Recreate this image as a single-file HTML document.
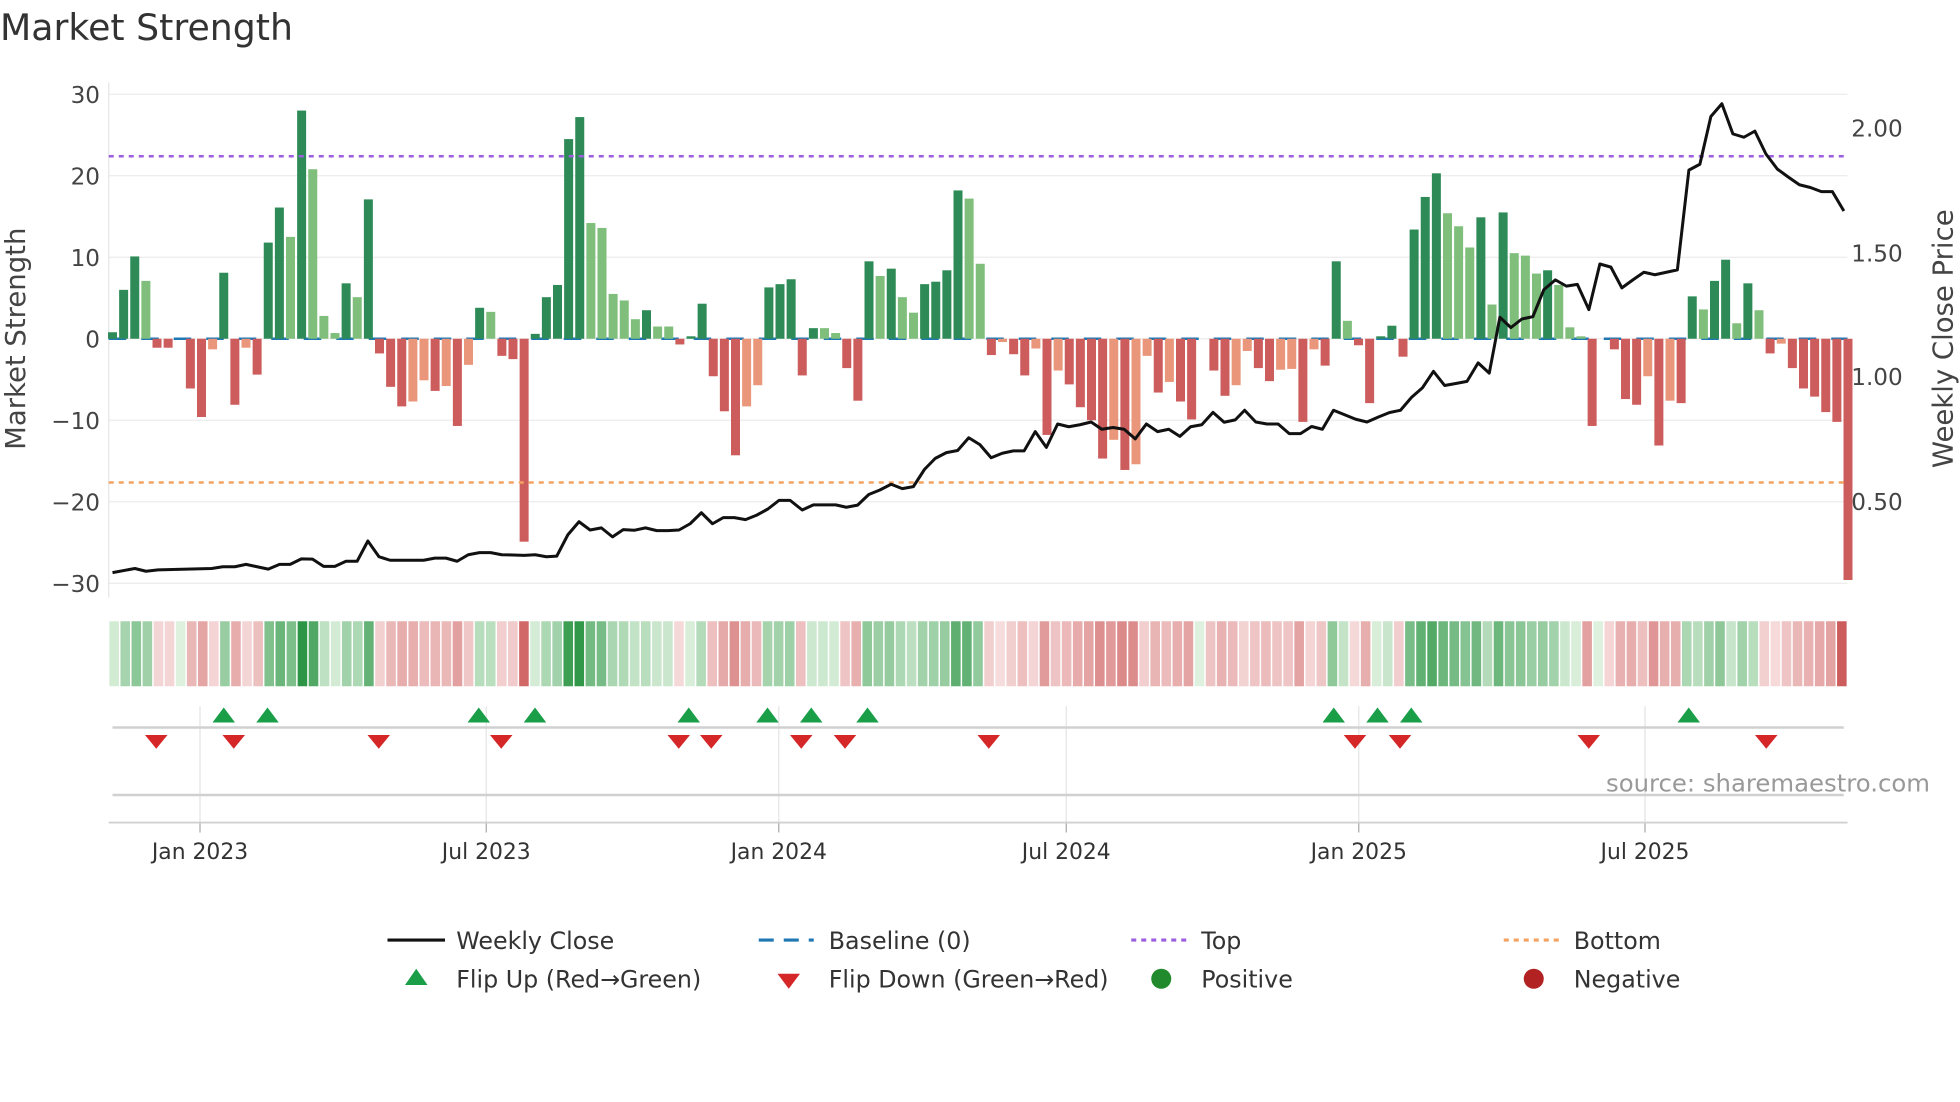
<!DOCTYPE html>
<html><head><meta charset="utf-8">
<style>
html,body{margin:0;padding:0;background:#fff;width:1960px;height:1102px;overflow:hidden}
svg{display:block}
text{font-family:"DejaVu Sans","Liberation Sans",sans-serif}
</style></head>
<body>
<svg id="c" width="1960" height="1102" viewBox="0 0 1568 881.6" xmlns="http://www.w3.org/2000/svg">
<rect width="1568" height="882" fill="#fff"/>
<text x="0" y="32" font-size="29" fill="#333">Market Strength</text>
<g id="grid" stroke="#ececec" stroke-width="1"></g>
<line x1="87" y1="66" x2="87" y2="478" stroke="#e6e6e6"/>
<line x1="87" y1="271" x2="1478" y2="271" stroke="#1f77b4" stroke-width="2" stroke-dasharray="14,12"/>
<g id="bars"></g>
<line x1="87" y1="125" x2="1478" y2="125" stroke="#9b5fe0" stroke-width="2" stroke-dasharray="4,4"/>
<line x1="87" y1="386" x2="1478" y2="386" stroke="#f4a261" stroke-width="2" stroke-dasharray="4,4"/>
<polyline id="price" fill="none" stroke="#111" stroke-width="2.4" stroke-linejoin="round"/>
<g id="ylab" font-size="18.5" fill="#444"></g>
<text transform="translate(20,271) rotate(-90)" text-anchor="middle" font-size="22" fill="#444">Market Strength</text>
<text transform="translate(1562,271) rotate(-90)" text-anchor="middle" font-size="22" fill="#444">Weekly Close Price</text>
<g id="strip"></g>
<g id="vgrid" stroke="#e4e4e4"></g>
<line x1="90" y1="582" x2="1475" y2="582" stroke="#d0d0d0" stroke-width="2"/>
<line x1="90" y1="636" x2="1475" y2="636" stroke="#d0d0d0" stroke-width="2"/>
<line x1="87" y1="658" x2="1478" y2="658" stroke="#d0d0d0" stroke-width="1.5"/>
<g id="marks"></g>
<text x="1544" y="633" text-anchor="end" font-size="19.5" fill="#999">source: sharemaestro.com</text>
<g id="xlab" font-size="17.5" fill="#333" text-anchor="middle"></g>
<g font-size="19" fill="#333">
<line x1="310" y1="752" x2="356" y2="752" stroke="#111" stroke-width="2.5"/>
<text x="365" y="759">Weekly Close</text>
<line x1="607" y1="752" x2="651" y2="752" stroke="#1f77b4" stroke-width="2.5" stroke-dasharray="12,8"/>
<text x="663" y="759">Baseline (0)</text>
<line x1="905" y1="752" x2="949" y2="752" stroke="#9b5fe0" stroke-width="2.5" stroke-dasharray="4,4"/>
<text x="961" y="759">Top</text>
<line x1="1203" y1="752" x2="1247" y2="752" stroke="#f4a261" stroke-width="2.5" stroke-dasharray="4,4"/>
<text x="1259" y="759">Bottom</text>
<polygon points="333,775 342,788 324,788" fill="#1a9e48"/>
<text x="365" y="790">Flip Up (Red→Green)</text>
<polygon points="622,779 640,779 631,791" fill="#d62728"/>
<text x="663" y="790">Flip Down (Green→Red)</text>
<circle cx="929" cy="783" r="8" fill="#218a2c"/>
<text x="961" y="790">Positive</text>
<circle cx="1227" cy="783" r="8" fill="#b22222"/>
<text x="1259" y="790">Negative</text>
</g>
</svg>
<script>
var NS="http://www.w3.org/2000/svg";
function el(p,t,a,txt){var e=document.createElementNS(NS,t);for(var k in a)e.setAttribute(k,a[k]);if(txt!=null)e.textContent=txt;document.getElementById(p).appendChild(e);return e;}
var V=[[0.8,1],[6,1],[10.1,1],[7.1,0],[-1.1,1],[-1.1,1],[0,1],[-6.1,1],[-9.6,1],[-1.3,0],[8.1,1],[-8.1,1],[-1.1,0],[-4.4,1],[11.8,1],[16.1,1],[12.5,0],[28,1],[20.8,0],[2.8,0],[0.7,0],[6.8,1],[5.1,0],[17.1,1],[-1.8,1],[-5.9,1],[-8.3,1],[-7.7,0],[-5.1,0],[-6.4,1],[-5.8,0],[-10.7,1],[-3.2,0],[3.8,1],[3.3,0],[-2.1,1],[-2.5,1],[-24.9,1],[0.6,1],[5.1,1],[6.6,1],[24.5,1],[27.2,1],[14.2,0],[13.6,0],[5.5,0],[4.7,0],[2.4,0],[3.5,1],[1.5,0],[1.5,0],[-0.7,1],[0.3,1],[4.3,1],[-4.6,1],[-8.9,1],[-14.3,1],[-8.3,0],[-5.7,0],[6.3,1],[6.7,1],[7.3,1],
[-4.5,1],[1.3,1],[1.3,0],[0.7,0],[-3.6,1],[-7.6,1],[9.5,1],[7.7,0],[8.6,1],[5.1,0],[3.2,0],[6.7,1],[7,1],[8.4,1],[18.2,1],[17.2,0],[9.2,0],[-2,1],[-0.4,0],[-1.9,1],[-4.5,1],[-1.2,0],[-11.8,1],[-3.9,0],[-5.6,1],[-8.4,1],[-10,1],[-14.7,1],[-12.4,0],[-16.1,1],[-15.4,0],[-2.1,0],[-6.6,1],[-5.3,0],[-7.7,1],[-9.9,1],[0,1],[-3.9,1],[-7,1],[-5.7,0],[-1.5,0],[-3.6,1],[-5.2,1],[-3.8,0],[-3.7,0],[-10.2,1],[-1.3,0],[-3.3,1],[9.5,1],[2.2,0],[-0.8,1],[-7.9,1],[0.3,1],[1.6,1],[-2.2,1],[13.4,1],[17.4,1],[20.3,1],[15.4,0],[13.8,0],[11.2,0],[14.9,1],[4.2,0],[15.5,1],
[10.5,0],[10.2,0],[8,0],[8.4,1],[6.6,0],[1.4,0],[0.3,0],[-10.7,1],[0,1],[-1.3,1],[-7.4,1],[-8.1,1],[-4.6,0],[-13.1,1],[-7.6,0],[-7.9,1],[5.2,1],[3.6,0],[7.1,1],[9.7,1],[1.9,0],[6.8,1],[3.5,0],[-1.8,1],[-0.6,0],[-3.6,1],[-6.1,1],[-7.1,1],[-9,1],[-10.2,1],[-29.6,1]];
var Y0=271,S=6.52,DX=8.9,X0=90;
for(var v=-30;v<=30;v+=10){var y=Y0-v*S;el("grid","line",{x1:87,y1:y,x2:1478,y2:y});el("ylab","text",{x:80,y:y+7,"text-anchor":"end"},(v<0?"\u2212"+(-v):""+v));}
[["2.00",102],["1.50",202],["1.00",301],["0.50",401]].forEach(function(a){el("ylab","text",{x:1481,y:a[1]+7},a[0]);});
function mix(a,b,t){var r=[];for(var i=0;i<3;i++)r.push(Math.round(a[i]+(b[i]-a[i])*t));return "rgb("+r.join(",")+")";}
var SW=1391/V.length;
V.forEach(function(d,i){var v=d[0],x=X0+DX*i-3.6;
 if(v!==0){var c=v>0?(d[1]?"#2e8b57":"#7fbf7b"):(d[1]?"#cd5c5c":"#e9967a");
  var y=v>0?Y0-v*S:Y0;el("bars","rect",{x:x,y:y,width:7.2,height:Math.abs(v)*S,fill:c});}
 var t=Math.min(1,Math.abs(v)/28);t=Math.pow(t,0.75);
 var col=v>=0?mix([222,241,222],[45,150,70],t):mix([248,225,225],[205,92,92],t);
 el("strip","rect",{x:87+SW*i+0.5,y:497,width:SW-1.2,height:52,fill:col});
});
var P=[];
function add(pts,ox,kx,ky){pts.forEach(function(p){P.push([ox+p[0]/kx,Y0-(752-p[1])*ky]);});}
add([[28,1432],[78,1420],[103,1428],[130,1424],[250,1420],[275,1415],[302,1415],[327,1408],[352,1415],[377,1422],[402,1408],[426,1408],[451,1392],[476,1393],[501,1414],[526,1414],[551,1399],[576,1399],[600,1340],[625,1386],[650,1396],[725,1396],[750,1390],[775,1390],[800,1399],[825,1380],[850,1374],[875,1374],[900,1380],[925,1381],[950,1382],[975,1380],[1000,1386],[1023,1384],[1048,1322],[1073,1284],[1098,1308],[1123,1302],[1148,1328],[1172,1307],[1197,1309],[1222,1302],[1247,1310],[1272,1310],[1297,1308],[1322,1290],[1347,1258],[1372,1290],[1396,1272],[1421,1272],[1446,1278],[1471,1265],[1496,1247],[1521,1222],[1546,1222]],80,2.8,0.2751);
add([[5,1250],[30,1235],[80,1235],[104,1242],[129,1236],[154,1205],[179,1192],[204,1175],[229,1188],[254,1182],[279,1132],[303,1100],[328,1083],[353,1077],[378,1040],[403,1060],[428,1098],[453,1085],[478,1078],[502,1078],[527,1022],[552,1068],[577,1000],[602,1008],[627,1002],[652,994],[676,1015],[701,1010],[726,1015],[751,1043],[776,1000],[801,1022],[826,1015],[851,1036],[875,1008],[900,1002],[925,966],[950,995],[975,988],[996,960],[1021,994],[1046,1000],[1071,1000],[1096,1028],[1121,1028],[1146,1007],[1170,1015],[1195,960],[1220,973],[1245,986],[1270,994],[1295,980],[1320,967],[1345,960],[1370,922],[1394,895],[1419,847],[1444,888],[1469,882],[1494,876],[1519,822],[1544,852]],640,2.8,0.2751);
add([[836,690],[859,720],[882,695],[905,688],[928,610],[952,582],[975,600],[998,595],[1022,668],[1045,536],[1068,545],[1091,605],[1114,582],[1137,560],[1160,567],[1184,560],[1207,553],[1231,265],[1254,248],[1277,110],[1300,73],[1323,160],[1346,170],[1369,152],[1392,218],[1416,262],[1439,285],[1462,307],[1485,315],[1508,327],[1531,327],[1555,383]],880,2.613,0.2769);
document.getElementById("price").setAttribute("points",P.map(function(p){return p[0].toFixed(1)+","+p[1].toFixed(1);}).join(" "));
[["Jan 2023",160],["Jul 2023",389],["Jan 2024",623],["Jul 2024",853],["Jan 2025",1087],["Jul 2025",1316]].forEach(function(a){
 el("vgrid","line",{x1:a[1],y1:565,x2:a[1],y2:658});
 el("vgrid","line",{x1:a[1],y1:658,x2:a[1],y2:666,stroke:"#aaa"});
 el("xlab","text",{x:a[1],y:687},a[0]);});
[179,214,383,428,551,614,649,694,1067,1102,1129,1351].forEach(function(x){el("marks","polygon",{points:x+",566 "+(x+9)+",578 "+(x-9)+",578",fill:"#1a9e48"});});
[125,187,303,401,543,569,641,676,791,1084,1120,1271,1413].forEach(function(x){el("marks","polygon",{points:(x-9)+",588 "+(x+9)+",588 "+x+",599",fill:"#d62728"});});
</script>
</body></html>
